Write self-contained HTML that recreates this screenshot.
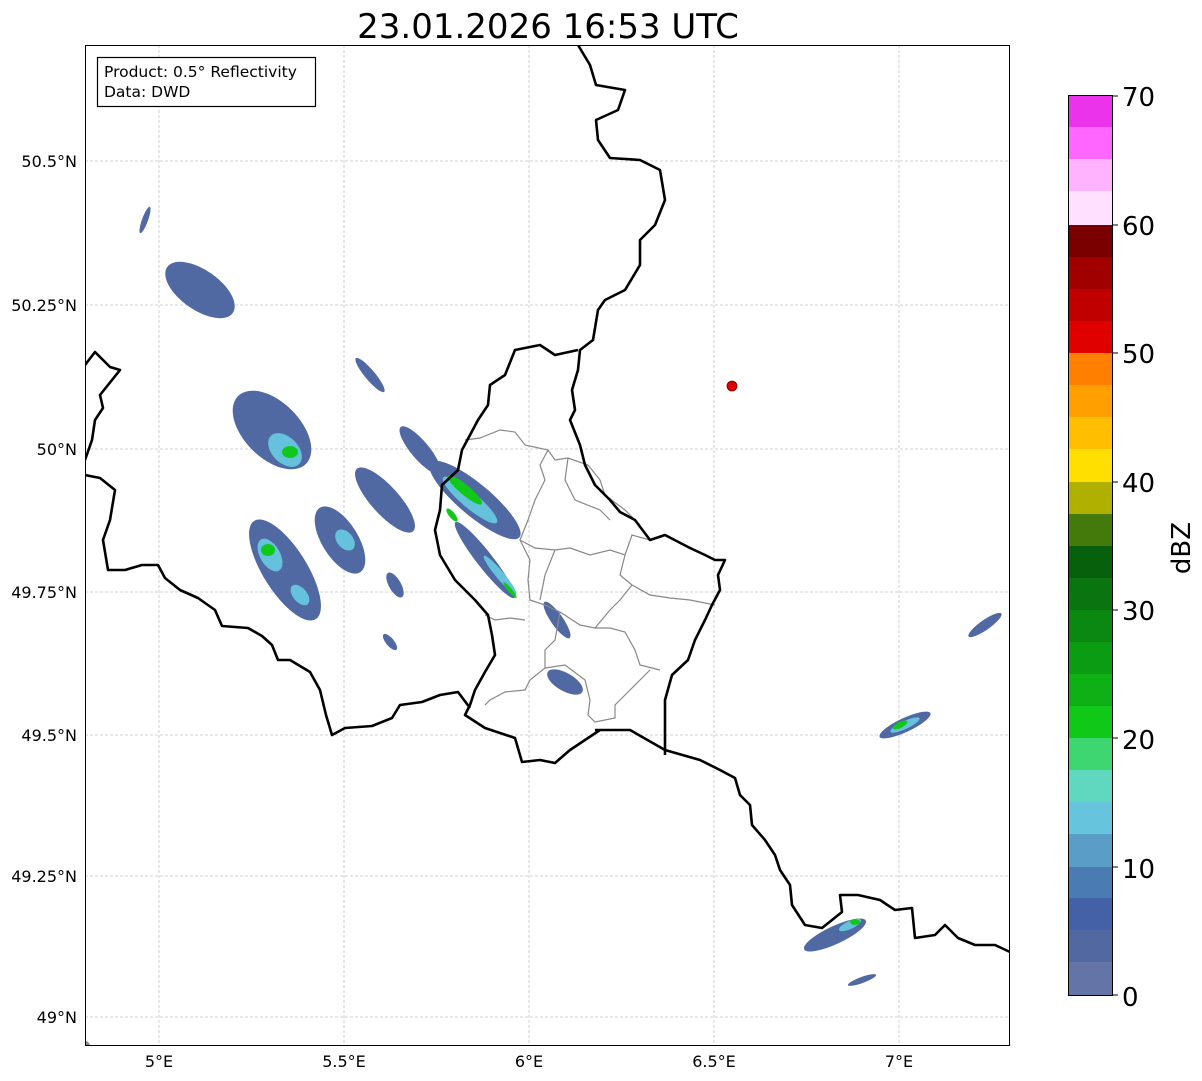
<!DOCTYPE html>
<html><head><meta charset="utf-8"><style>
html,body{margin:0;padding:0;background:#fff;}
svg{display:block;font-family:"DejaVu Sans","Liberation Sans",sans-serif;}
</style></head><body>
<svg width="1202" height="1081" viewBox="0 0 1202 1081" xmlns="http://www.w3.org/2000/svg">
<rect width="1202" height="1081" fill="#fff"/>
<text x="548" y="38" font-size="34" text-anchor="middle" fill="#000">23.01.2026 16:53 UTC</text>
<defs><clipPath id="c"><rect x="85" y="45" width="925" height="1001"/></clipPath></defs>
<g stroke="#c4c4c4" stroke-width="0.8" stroke-dasharray="3,2">
<line x1="159" y1="45" x2="159" y2="1046"/><line x1="344" y1="45" x2="344" y2="1046"/>
<line x1="529" y1="45" x2="529" y2="1046"/><line x1="714" y1="45" x2="714" y2="1046"/>
<line x1="899" y1="45" x2="899" y2="1046"/>
<line x1="85" y1="161" x2="1010" y2="161"/><line x1="85" y1="305" x2="1010" y2="305"/>
<line x1="85" y1="449" x2="1010" y2="449"/><line x1="85" y1="592" x2="1010" y2="592"/>
<line x1="85" y1="735" x2="1010" y2="735"/><line x1="85" y1="876" x2="1010" y2="876"/>
<line x1="85" y1="1017" x2="1010" y2="1017"/>
</g>
<g clip-path="url(#c)">
<g fill="#5069a3">
<ellipse cx="200" cy="290" rx="40" ry="20" transform="rotate(35 200 290)"/>
<ellipse cx="145" cy="220" rx="3" ry="14" transform="rotate(20 145 220)"/>
<ellipse cx="272" cy="430" rx="48" ry="28" transform="rotate(45 272 430)"/>
<ellipse cx="370" cy="375" rx="22" ry="5" transform="rotate(50 370 375)"/>
<ellipse cx="285" cy="570" rx="58" ry="22" transform="rotate(58 285 570)"/>
<ellipse cx="340" cy="540" rx="38" ry="18" transform="rotate(58 340 540)"/>
<ellipse cx="385" cy="500" rx="42" ry="14" transform="rotate(48 385 500)"/>
<ellipse cx="420" cy="450" rx="30" ry="9" transform="rotate(50 420 450)"/>
<ellipse cx="475" cy="500" rx="58" ry="16" transform="rotate(40 475 500)"/>
<ellipse cx="485" cy="560" rx="48" ry="8" transform="rotate(52 485 560)"/>
<ellipse cx="395" cy="585" rx="6" ry="14" transform="rotate(-30 395 585)"/>
<ellipse cx="390" cy="642" rx="4" ry="10" transform="rotate(-40 390 642)"/>
<ellipse cx="557" cy="620" rx="22" ry="6" transform="rotate(55 557 620)"/>
<ellipse cx="565" cy="682" rx="20" ry="9" transform="rotate(30 565 682)"/>
<ellipse cx="905" cy="725" rx="28" ry="7" transform="rotate(-25 905 725)"/>
<ellipse cx="985" cy="625" rx="20" ry="5" transform="rotate(-35 985 625)"/>
<ellipse cx="835" cy="935" rx="34" ry="9" transform="rotate(-25 835 935)"/>
<ellipse cx="862" cy="980" rx="15" ry="3" transform="rotate(-20 862 980)"/>
</g>
<g fill="#66c2dc">
<ellipse cx="285" cy="450" rx="20" ry="13" transform="rotate(45 285 450)"/>
<ellipse cx="270" cy="555" rx="18" ry="10" transform="rotate(60 270 555)"/>
<ellipse cx="345" cy="540" rx="12" ry="8" transform="rotate(50 345 540)"/>
<ellipse cx="300" cy="595" rx="12" ry="7" transform="rotate(50 300 595)"/>
<ellipse cx="470" cy="500" rx="35" ry="8" transform="rotate(40 470 500)"/>
<ellipse cx="500" cy="575" rx="25" ry="4" transform="rotate(50 500 575)"/>
<ellipse cx="905" cy="725" rx="16" ry="4" transform="rotate(-25 905 725)"/>
<ellipse cx="850" cy="925" rx="12" ry="4" transform="rotate(-25 850 925)"/>
</g>
<g fill="#10c818">
<ellipse cx="290" cy="452" rx="8" ry="6"/>
<ellipse cx="268" cy="550" rx="7" ry="6"/>
<ellipse cx="465" cy="490" rx="22" ry="5" transform="rotate(40 465 490)"/>
<ellipse cx="452" cy="515" rx="8" ry="3" transform="rotate(50 452 515)"/>
<ellipse cx="510" cy="590" rx="10" ry="2" transform="rotate(50 510 590)"/>
<ellipse cx="900" cy="725" rx="8" ry="3" transform="rotate(-25 900 725)"/>
<ellipse cx="855" cy="922" rx="5" ry="3"/>
</g>
<g fill="none" stroke="#888" stroke-width="1.2">
<path d="M465,440 L480,438 L500,430 L515,432 L525,445 L548,450 L540,465 L545,480 L535,500 L528,520 L520,540 L535,548 L555,550 L570,548 L590,555 L610,550 L625,555 L632,535 L650,540"/>
<path d="M548,450 L555,460 L568,458 L588,465 L600,480 L605,495 L625,510 L640,525"/>
<path d="M520,540 L530,560 L528,580 L530,600 L545,605 L560,612 L580,625 L595,628 L610,628 L625,632 L635,650 L640,665 L660,670"/>
<path d="M568,458 L565,480 L575,500 L600,510 L610,520"/>
<path d="M555,550 L545,575 L540,600"/>
<path d="M625,555 L620,575 L632,585 L620,600 L610,610 L595,628"/>
<path d="M632,585 L650,595 L670,598 L690,600 L715,605"/>
<path d="M485,615 L495,620 L510,618 L525,620"/>
<path d="M560,612 L555,640 L545,650 L545,668 L530,680 L525,690 L505,692 L490,700 L485,705"/>
<path d="M545,668 L565,665 L585,680 L590,700 L588,715 L595,722 L615,718 L615,705 L625,695 L640,680 L650,670"/>
</g>
<g fill="none" stroke="#000" stroke-width="2.6" stroke-linejoin="round">
<path d="M578,45 L590,65 L596,85 L625,90 L618,110 L596,120 L598,140 L610,158 L640,160 L660,170 L665,200 L655,225 L640,240 L640,265 L625,290 L605,300 L598,310 L593,340 L580,350 L578,370 L572,390 L575,410 L570,420 L580,445 L585,465 L595,485 L610,500 L620,512 L635,520 L650,540 L665,535 L690,548 L705,555 L715,560 L725,560 L718,575 L720,590 L712,605 L705,620 L695,640 L688,660 L672,675 L665,700 L665,720 L665,755"/>
<path d="M595,730 L630,730 L665,750 L700,760 L720,770 L735,778 L740,795 L750,805 L752,825 L765,840 L775,855 L780,870 L790,885 L792,905 L805,925 L822,928 L842,912 L840,895 L858,895 L880,900 L895,910 L912,908 L915,938 L935,935 L945,925 L958,938 L975,945 L995,945 L1010,952"/>
<path d="M578,350 L555,355 L540,345 L515,350 L505,375 L490,385 L488,405 L478,420 L470,435 L462,450 L458,470 L442,485 L440,510 L435,530 L440,555 L455,580 L475,600 L488,615 L492,635 L495,655 L485,672 L475,690 L470,705 L465,715 L485,728 L515,738 L522,762 L540,760 L555,763 L570,750 L585,740 L600,730"/>
<path d="M85,365 L95,352 L110,367 L120,370 L108,385 L100,395 L103,408 L95,420 L92,440 L85,460"/>
<path d="M85,475 L100,478 L115,490 L110,520 L103,540 L108,570 L125,570 L142,565 L158,565 L165,578 L180,590 L198,598 L215,610 L222,626 L248,628 L262,636 L272,645 L278,660 L290,660 L310,672 L320,690 L326,715 L332,735 L345,728 L372,726 L392,718 L400,705 L422,702 L440,695 L458,692 L470,708"/>
</g>
<circle cx="85" cy="1046" r="5" fill="#888"/>
<circle cx="732" cy="386" r="5" fill="#e00000" stroke="#600" stroke-width="0.8"/>
</g>
<rect x="85.5" y="45.5" width="924" height="1000" fill="none" stroke="#000" stroke-width="1"/>
<rect x="97.5" y="57.5" width="218" height="49" fill="#fff" stroke="#000" stroke-width="1.2"/>
<text x="104" y="77" font-size="15.5">Product: 0.5° Reflectivity</text>
<text x="104" y="97" font-size="15.5">Data: DWD</text>
<g font-size="16" fill="#000" text-anchor="end">
<text x="77" y="167">50.5°N</text><text x="77" y="311">50.25°N</text>
<text x="77" y="455">50°N</text><text x="77" y="598">49.75°N</text>
<text x="77" y="741">49.5°N</text><text x="77" y="882">49.25°N</text>
<text x="77" y="1023">49°N</text>
</g>
<g font-size="16" fill="#000" text-anchor="middle">
<text x="159" y="1067">5°E</text><text x="344" y="1067">5.5°E</text>
<text x="529" y="1067">6°E</text><text x="714" y="1067">6.5°E</text>
<text x="899" y="1067">7°E</text>
</g>
<g>
<rect x="1068" y="95" width="45" height="32" fill="#ea33ea"/>
<rect x="1068" y="127" width="45" height="32" fill="#ff66ff"/>
<rect x="1068" y="159" width="45" height="32" fill="#ffb3ff"/>
<rect x="1068" y="191" width="45" height="34" fill="#ffe0ff"/>
<rect x="1068" y="225" width="45" height="32" fill="#7a0000"/>
<rect x="1068" y="257" width="45" height="32" fill="#a00000"/>
<rect x="1068" y="289" width="45" height="32" fill="#c00000"/>
<rect x="1068" y="321" width="45" height="32" fill="#e00000"/>
<rect x="1068" y="353" width="45" height="32" fill="#ff7f00"/>
<rect x="1068" y="385" width="45" height="32" fill="#ff9f00"/>
<rect x="1068" y="417" width="45" height="32" fill="#ffbf00"/>
<rect x="1068" y="449" width="45" height="33" fill="#ffdf00"/>
<rect x="1068" y="482" width="45" height="32" fill="#b0b000"/>
<rect x="1068" y="514" width="45" height="32" fill="#447a0b"/>
<rect x="1068" y="546" width="45" height="32" fill="#06600c"/>
<rect x="1068" y="578" width="45" height="32" fill="#0a7510"/>
<rect x="1068" y="610" width="45" height="32" fill="#0b8812"/>
<rect x="1068" y="642" width="45" height="32" fill="#0c9c14"/>
<rect x="1068" y="674" width="45" height="32" fill="#0eb016"/>
<rect x="1068" y="706" width="45" height="32" fill="#10c818"/>
<rect x="1068" y="738" width="45" height="32" fill="#3dd670"/>
<rect x="1068" y="770" width="45" height="32" fill="#60d8c0"/>
<rect x="1068" y="802" width="45" height="32" fill="#66c4dc"/>
<rect x="1068" y="834" width="45" height="33" fill="#5a9ec8"/>
<rect x="1068" y="867" width="45" height="31" fill="#4a7bb3"/>
<rect x="1068" y="898" width="45" height="32" fill="#4460a6"/>
<rect x="1068" y="930" width="45" height="32" fill="#5268a0"/>
<rect x="1068" y="962" width="45" height="34" fill="#6474a6"/>
<rect x="1068.5" y="95.5" width="44" height="900" fill="none" stroke="#000" stroke-width="1"/>
</g>
<g font-size="26" fill="#000">
<text x="1122" y="106">70</text><text x="1122" y="235">60</text>
<text x="1122" y="363">50</text><text x="1122" y="492">40</text>
<text x="1122" y="620">30</text><text x="1122" y="749">20</text>
<text x="1122" y="878">10</text><text x="1122" y="1006">0</text>
</g>
<g stroke="#000" stroke-width="1">
<line x1="1113" y1="96" x2="1118" y2="96"/><line x1="1113" y1="225" x2="1118" y2="225"/>
<line x1="1113" y1="353" x2="1118" y2="353"/><line x1="1113" y1="482" x2="1118" y2="482"/>
<line x1="1113" y1="610" x2="1118" y2="610"/><line x1="1113" y1="738" x2="1118" y2="738"/>
<line x1="1113" y1="867" x2="1118" y2="867"/><line x1="1113" y1="995" x2="1118" y2="995"/>
</g>
<text x="1190" y="548" font-size="26" text-anchor="middle" transform="rotate(-90 1190 548)">dBZ</text>
</svg>
</body></html>
